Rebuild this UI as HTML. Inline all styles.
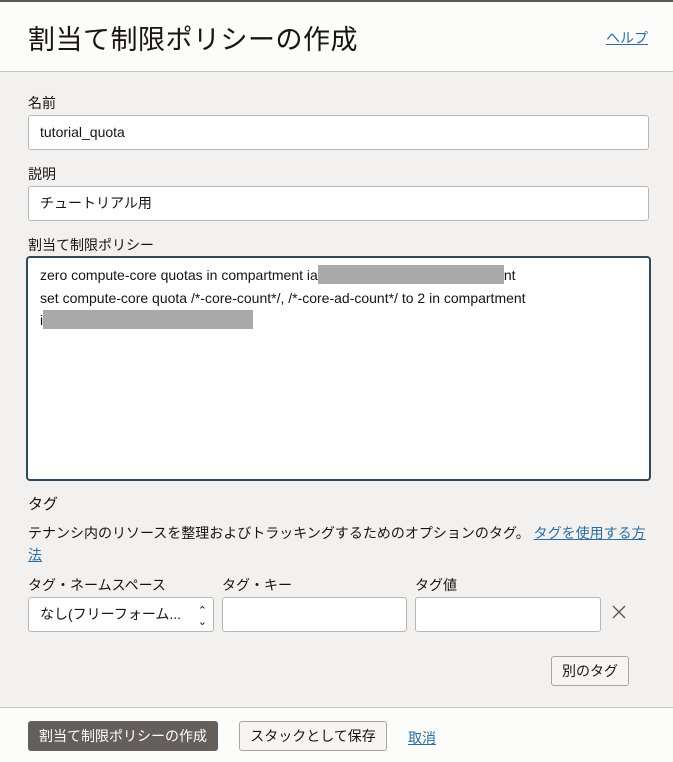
<!DOCTYPE html>
<html><head><meta charset="utf-8"><style>
*{box-sizing:border-box;margin:0;padding:0}
body{width:673px;height:762px;overflow:hidden;background:#f2f1f0;font-family:"Liberation Sans","Noto Sans CJK JP",sans-serif;color:#161513;position:relative;font-size:14px}
.top{position:absolute;left:0;top:0;width:673px;height:2px;background:#5a5856}
.hdr{position:absolute;left:0;top:2px;width:673px;height:70px;background:#fcfcfb;border-bottom:1px solid #c5c3c0}
.hdr h1{position:absolute;left:28px;top:16px;font-size:27px;font-weight:normal;letter-spacing:0.5px}
.help{position:absolute;left:606px;top:26px;font-size:14px;color:#2b6ea2;text-decoration:underline}
.a{position:absolute}
.lbl{font-size:14px}
.inp{background:#fff;border:1px solid #b8b6b3;border-radius:3px;height:35px;padding:0 11px;line-height:33px;font-size:14px}
.ta{background:#fff;border:2px solid #2e4a5c;border-radius:4px;padding:6px 12px;font-size:14px;line-height:22.5px}
.red{display:inline-block;background:#a9a9ab;height:19px;vertical-align:-4px}
.btn{background:#f6f5f4;border:1px solid #a8a6a3;border-radius:3px;font-size:14px;text-align:center}
.ftr{position:absolute;left:0;top:707px;width:673px;height:55px;background:#fcfcfb;border-top:1px solid #c5c3c0}
</style></head><body>
<div class="top"></div>
<div class="hdr"><h1>割当て制限ポリシーの作成</h1><span class="help">ヘルプ</span></div>
<div class="a lbl" style="left:28px;top:93px">名前</div>
<div class="a inp" style="left:28px;top:115px;width:621px">tutorial_quota</div>
<div class="a lbl" style="left:28px;top:164px">説明</div>
<div class="a inp" style="left:28px;top:186px;width:621px">チュートリアル用</div>
<div class="a lbl" style="left:28px;top:235px">割当て制限ポリシー</div>
<div class="a ta" style="left:26px;top:256px;width:625px;height:225px">zero compute-core quotas in compartment ia<span class="red" style="width:186px"></span>nt<br>set compute-core quota /*-core-count*/, /*-core-ad-count*/ to 2 in compartment<br>i<span class="red" style="width:210px"></span></div>
<div class="a" style="left:28px;top:493px;font-size:15px">タグ</div>
<div class="a" style="left:28px;top:522px;width:625px;font-size:14px;line-height:22px">テナンシ内のリソースを整理およびトラッキングするためのオプションのタグ。 <span style="color:#2b6ea2;text-decoration:underline">タグを使用する方法</span></div>
<div class="a lbl" style="left:28px;top:575px">タグ・ネームスペース</div>
<div class="a lbl" style="left:222px;top:575px">タグ・キー</div>
<div class="a lbl" style="left:415px;top:575px">タグ値</div>
<div class="a inp" style="left:28px;top:597px;width:186px">なし(フリーフォーム...<span style="position:absolute;right:6px;top:0;font-size:11px;line-height:11px;top:8px">⌃<br>⌄</span></div>
<div class="a inp" style="left:222px;top:597px;width:185px"></div>
<div class="a inp" style="left:415px;top:597px;width:186px"></div>
<svg class="a" style="left:612px;top:605px" width="14" height="14"><path d="M1 1L13 13M13 1L1 13" stroke="#555" stroke-width="1.3"/></svg>
<div class="a btn" style="left:551px;top:656px;width:78px;height:30px;line-height:28px">別のタグ</div>
<div class="ftr"></div>
<div class="a btn" style="left:28px;top:721px;width:190px;height:30px;line-height:30px;background:#645f5b;border:none;color:#fff">割当て制限ポリシーの作成</div>
<div class="a btn" style="left:239px;top:721px;width:148px;height:30px;line-height:28px">スタックとして保存</div>
<div class="a" style="left:408px;top:728px;color:#2b6ea2;text-decoration:underline">取消</div>
</body></html>
